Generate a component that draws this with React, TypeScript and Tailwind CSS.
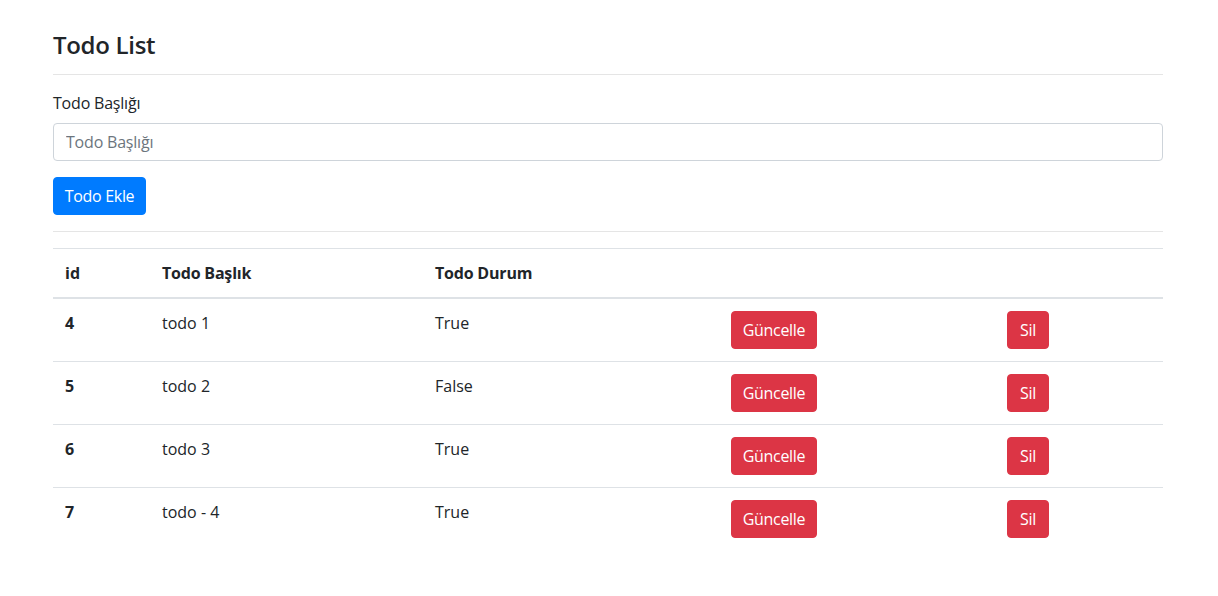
import React from 'react';

type Todo = { id: number; title: string; done: boolean };

const todos: Todo[] = [
  { id: 4, title: 'todo 1', done: true },
  { id: 5, title: 'todo 2', done: false },
  { id: 6, title: 'todo 3', done: true },
  { id: 7, title: 'todo - 4', done: true },
];

const font = { fontFamily: '"Segoe UI", "Open Sans", "Noto Sans", sans-serif' };

const RedButton: React.FC<{ label: string; width: string }> = ({ label, width }) => (
  <button
    className={`h-[38px] ${width} rounded-[4px] border border-[#dc3545] bg-[#dc3545] text-white text-[16px] leading-6 tracking-[-0.3px] whitespace-nowrap`}
  >
    {label}
  </button>
);

const App: React.FC = () => {
  return (
    <div className="bg-white min-h-[596px] text-[#212529] text-[16px] leading-6" style={font}>
      <div className="w-[1110px] ml-[53px] pt-[31px]">
        <h4 className="text-[24px] leading-[28.8px] font-semibold tracking-[-0.3px]">Todo List</h4>
        <hr className="mt-[14px] mb-4 border-0 border-t border-[#e5e5e5]" />

        <div className="mb-4">
          <label className="block mb-2 tracking-[-0.2px]">Todo Başlığı</label>
          <input
            className="block w-full h-[38px] px-3 border border-[#ced4da] rounded-[4px] text-[#495057] placeholder:text-[#6c757d] outline-none tracking-[-0.2px]"
            placeholder="Todo Başlığı"
          />
        </div>
        <button className="h-[38px] w-[93px] rounded-[4px] border border-[#007bff] bg-[#007bff] text-white tracking-[-0.3px] whitespace-nowrap">
          Todo Ekle
        </button>
        <hr className="mt-4 mb-4 border-0 border-t border-[#e5e5e5]" />

        <table className="w-full border-collapse table-fixed">
          <colgroup>
            <col className="w-[97px]" />
            <col className="w-[273px]" />
            <col className="w-[296px]" />
            <col className="w-[276px]" />
            <col />
          </colgroup>
          <thead>
            <tr className="border-t border-[#dee2e6] border-b-2">
              <th className="p-3 text-left font-bold">id</th>
              <th className="p-3 text-left font-bold tracking-[-0.2px]">Todo Başlık</th>
              <th className="p-3 text-left font-bold tracking-[-0.2px]">Todo Durum</th>
              <th className="p-3"></th>
              <th className="p-3"></th>
            </tr>
          </thead>
          <tbody>
            {todos.map((t, i) => (
              <tr key={t.id} className={i === 0 ? '' : 'border-t border-[#dee2e6]'}>
                <th className="p-3 text-left align-top font-bold">{t.id}</th>
                <td className="p-3 align-top">{t.title}</td>
                <td className="p-3 align-top">{t.done ? 'True' : 'False'}</td>
                <td className="p-3 align-top">
                  <RedButton label="Güncelle" width="w-[86px]" />
                </td>
                <td className="p-3 align-top">
                  <RedButton label="Sil" width="w-[42px]" />
                </td>
              </tr>
            ))}
          </tbody>
        </table>
      </div>
    </div>
  );
};

export default App;
